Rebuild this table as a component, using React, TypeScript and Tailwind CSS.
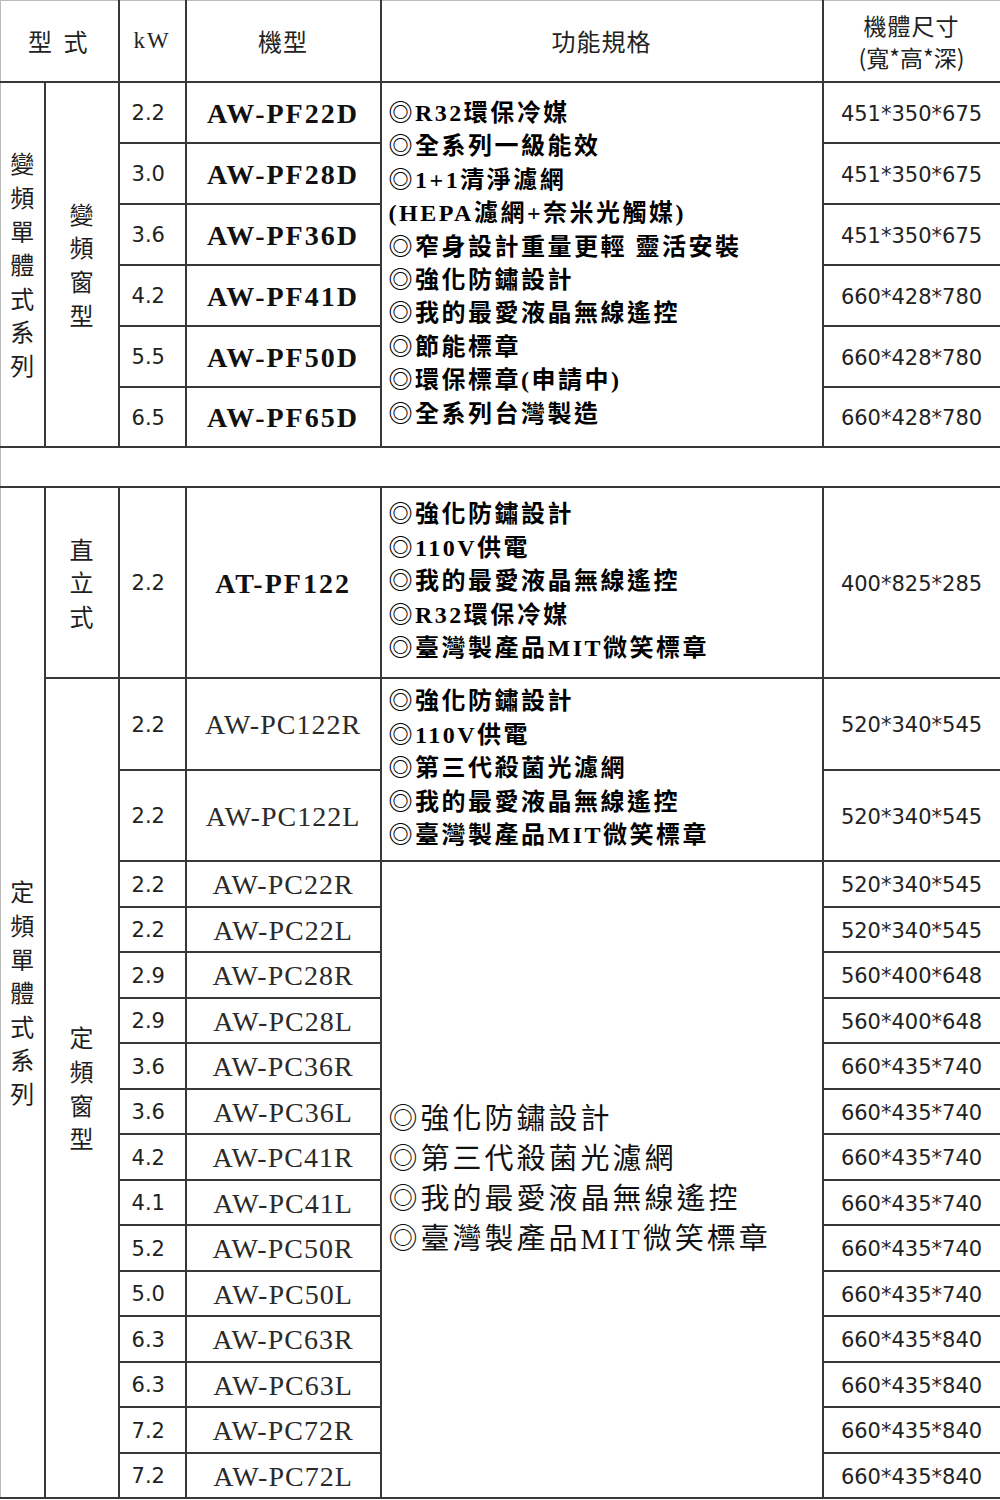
import React from "react";

const cjk = "font-['Noto_Sans_CJK_TC','Noto_Sans_CJK_JP',sans-serif]";
const serif = "font-['Liberation_Serif','Noto_Sans_CJK_TC',serif]";
const num = "font-['DejaVu_Sans',sans-serif]";

const cell = "border-2 border-[#383838] p-0 align-middle";

const inverter = [
  { kw: "2.2", model: "AW-PF22D", size: "451*350*675" },
  { kw: "3.0", model: "AW-PF28D", size: "451*350*675" },
  { kw: "3.6", model: "AW-PF36D", size: "451*350*675" },
  { kw: "4.2", model: "AW-PF41D", size: "660*428*780" },
  { kw: "5.5", model: "AW-PF50D", size: "660*428*780" },
  { kw: "6.5", model: "AW-PF65D", size: "660*428*780" },
];

const fixedRows = [
  { kw: "2.2", model: "AW-PC22R", size: "520*340*545" },
  { kw: "2.2", model: "AW-PC22L", size: "520*340*545" },
  { kw: "2.9", model: "AW-PC28R", size: "560*400*648" },
  { kw: "2.9", model: "AW-PC28L", size: "560*400*648" },
  { kw: "3.6", model: "AW-PC36R", size: "660*435*740" },
  { kw: "3.6", model: "AW-PC36L", size: "660*435*740" },
  { kw: "4.2", model: "AW-PC41R", size: "660*435*740" },
  { kw: "4.1", model: "AW-PC41L", size: "660*435*740" },
  { kw: "5.2", model: "AW-PC50R", size: "660*435*740" },
  { kw: "5.0", model: "AW-PC50L", size: "660*435*740" },
  { kw: "6.3", model: "AW-PC63R", size: "660*435*840" },
  { kw: "6.3", model: "AW-PC63L", size: "660*435*840" },
  { kw: "7.2", model: "AW-PC72R", size: "660*435*840" },
  { kw: "7.2", model: "AW-PC72L", size: "660*435*840" },
];

const specA = [
  "◎R32環保冷媒",
  "◎全系列一級能效",
  "◎1+1清淨濾網",
  "(HEPA濾網+奈米光觸媒)",
  "◎窄身設計重量更輕 靈活安裝",
  "◎強化防鏽設計",
  "◎我的最愛液晶無線遙控",
  "◎節能標章",
  "◎環保標章(申請中)",
  "◎全系列台灣製造",
];

const specB = [
  "◎強化防鏽設計",
  "◎110V供電",
  "◎我的最愛液晶無線遙控",
  "◎R32環保冷媒",
  "◎臺灣製產品MIT微笑標章",
];

const specC = [
  "◎強化防鏽設計",
  "◎110V供電",
  "◎第三代殺菌光濾網",
  "◎我的最愛液晶無線遙控",
  "◎臺灣製產品MIT微笑標章",
];

const specD = [
  "◎強化防鏽設計",
  "◎第三代殺菌光濾網",
  "◎我的最愛液晶無線遙控",
  "◎臺灣製產品MIT微笑標章",
];

function Vertical({ text }: { text: string }) {
  return (
    <div className={`${cjk} flex flex-col items-center text-[24px] leading-[33.6px] text-[#1e1e1e]`}>
      {text.split("").map((c, i) => (
        <span key={i}>{c}</span>
      ))}
    </div>
  );
}

function BoldSpec({ lines }: { lines: string[] }) {
  return (
    <div className={`${serif} pl-[7px] text-[24px] font-bold leading-[33.4px] tracking-[2.5px] text-black`}>
      {lines.map((l) => (
        <div key={l} className="whitespace-nowrap">
          {l}
        </div>
      ))}
    </div>
  );
}

function Kw({ v }: { v: string }) {
  return (
    <td className={`${cell} ${num} pl-[12px] pt-[3px] text-left text-[21px] leading-none text-[#222]`}>{v}</td>
  );
}

function Size({ v }: { v: string }) {
  return (
    <td className={`${cell} ${num} pt-[4px] text-center text-[21px] leading-none text-[#222]`}>{v}</td>
  );
}

function Model({ v, bold }: { v: string; bold?: boolean }) {
  return (
    <td
      className={`${cell} ${serif} pt-[3px] text-center text-[28px] leading-none ${
        bold ? "font-bold tracking-[2px] text-[#111]" : "tracking-[1px] text-[#2a2a2a]"
      }`}
    >
      {v}
    </td>
  );
}

export default function App() {
  const heights = ["h-[61px]", "h-[61px]", "h-[61px]", "h-[61px]", "h-[61px]", "h-[60px]"];
  const fixedHeights = ["h-[46px]", "h-[45px]"];

  return (
    <div className="w-[1000px] bg-white">
      <table className="w-[1000px] table-fixed border-collapse">
        <colgroup>
          <col className="w-[44px]" />
          <col className="w-[74px]" />
          <col className="w-[67px]" />
          <col className="w-[195px]" />
          <col className="w-[442px]" />
          <col className="w-[178px]" />
        </colgroup>
        <tbody>
          {/* Header */}
          <tr className="h-[81px]">
            <td
              colSpan={2}
              className={`${cell} ${cjk} border-t border-t-[#bbb] border-l border-l-[#bbb] text-center text-[24px] tracking-[3px] text-[#222]`}
            >
              型 式
            </td>
            <td className={`${cell} ${serif} border-t border-t-[#bbb] text-center text-[23px] tracking-[2px] text-[#222]`}>
              kW
            </td>
            <td className={`${cell} ${cjk} border-t border-t-[#bbb] text-center text-[24px] tracking-[1px] text-[#222]`}>
              機型
            </td>
            <td className={`${cell} ${cjk} border-t border-t-[#bbb] text-center text-[24px] tracking-[1px] text-[#222]`}>
              功能規格
            </td>
            <td className={`${cell} ${cjk} border-t border-t-[#bbb] text-center text-[23px] leading-[32px] tracking-[1px] text-[#222]`}>
              <div>機體尺寸</div>
              <div className="tracking-[0px]">(寬*高*深)</div>
            </td>
          </tr>

          {/* Inverter series */}
          {inverter.map((r, i) => (
            <tr key={r.model} className={heights[i]}>
              {i === 0 && (
                <>
                  <td rowSpan={6} className={`${cell} border-l border-l-[#bbb]`}>
                    <Vertical text="變頻單體式系列" />
                  </td>
                  <td rowSpan={6} className={cell}>
                    <Vertical text="變頻窗型" />
                  </td>
                </>
              )}
              <Kw v={r.kw} />
              <Model v={r.model} bold />
              {i === 0 && (
                <td rowSpan={6} className={cell}>
                  <BoldSpec lines={specA} />
                </td>
              )}
              <Size v={r.size} />
            </tr>
          ))}

          {/* Spacer */}
          <tr className="h-[40px]">
            <td colSpan={6} className={`${cell} border-l border-l-[#bbb]`} />
          </tr>

          {/* Fixed-speed series: upright */}
          <tr className="h-[191px]">
            <td rowSpan={17} className={`${cell} border-l border-l-[#bbb]`}>
              <Vertical text="定頻單體式系列" />
            </td>
            <td className={cell}>
              <Vertical text="直立式" />
            </td>
            <Kw v="2.2" />
            <Model v="AT-PF122" bold />
            <td className={cell}>
              <BoldSpec lines={specB} />
            </td>
            <Size v="400*825*285" />
          </tr>

          {/* Window type 122 */}
          <tr className="h-[92px]">
            <td rowSpan={16} className={cell}>
              <Vertical text="定頻窗型" />
            </td>
            <Kw v="2.2" />
            <Model v="AW-PC122R" />
            <td rowSpan={2} className={cell}>
              <BoldSpec lines={specC} />
            </td>
            <Size v="520*340*545" />
          </tr>
          <tr className="h-[91px]">
            <Kw v="2.2" />
            <Model v="AW-PC122L" />
            <Size v="520*340*545" />
          </tr>

          {/* Window type list */}
          {fixedRows.map((r, i) => (
            <tr key={r.model} className={fixedHeights[i % 2]}>
              <Kw v={r.kw} />
              <Model v={r.model} />
              {i === 0 && (
                <td rowSpan={14} className={cell}>
                  <div className={`${serif} pl-[7px] text-[29px] leading-[40px] tracking-[3px] text-[#111]`}>
                    {specD.map((l) => (
                      <div key={l} className="whitespace-nowrap">
                        {l}
                      </div>
                    ))}
                  </div>
                </td>
              )}
              <Size v={r.size} />
            </tr>
          ))}
        </tbody>
      </table>
    </div>
  );
}
